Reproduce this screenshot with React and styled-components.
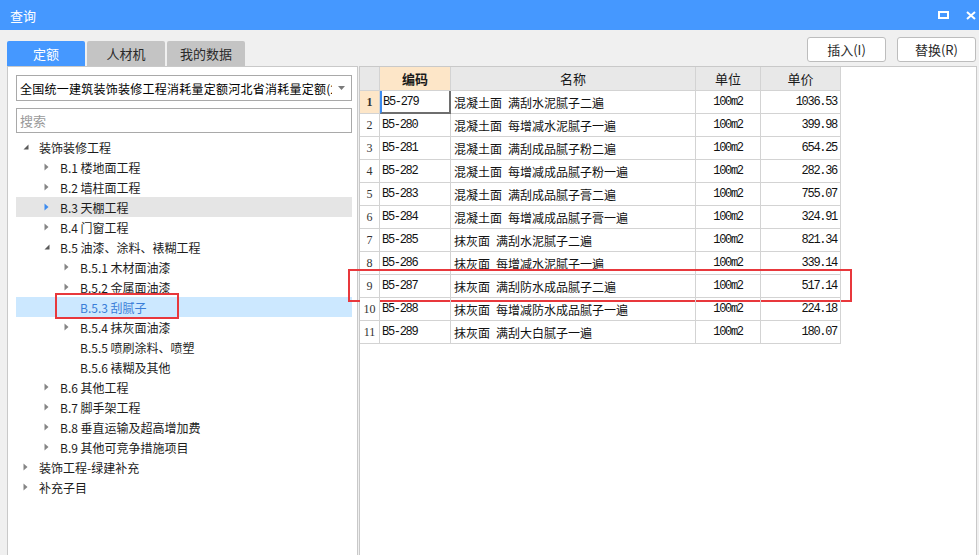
import React from 'react'
import styled, { createGlobalStyle } from 'styled-components'

const GlobalStyle = createGlobalStyle`
  html, body {
    margin: 0;
    padding: 0;
    background: #f0f0f0;
    overflow: hidden;
  }
  * {
    box-sizing: border-box;
  }
`

const CJK = `"Noto Sans CJK SC", "Noto Sans", sans-serif`
const MONO = `"Liberation Mono", "Noto Sans CJK SC", monospace`

const Window = styled.div`
  width: 979px;
  height: 555px;
  display: flex;
  flex-direction: column;
  background: #f0f0f0;
  font-family: ${CJK};
  overflow: hidden;
`
const TitleBar = styled.div`
  height: 30px;
  flex: none;
  background: #4598ff;
  display: flex;
  align-items: center;
  justify-content: space-between;
  padding: 0 3px 0 10px;
  color: #ffffff;
  font-size: 13px;
`
const TitleIcons = styled.div`
  display: flex;
  align-items: center;
  gap: 16px;
`
const IconBtn = styled.span`
  width: 11px;
  height: 10px;
  display: flex;
  align-items: center;
  justify-content: center;
`
const Body = styled.div`
  flex: 1;
  min-height: 0;
  display: flex;
  padding: 0 2px 0 7px;
`
const LeftCol = styled.div`
  width: 351px;
  flex: none;
  display: flex;
  flex-direction: column;
  padding-top: 11px;
`
const Tabs = styled.div`
  display: flex;
  gap: 2px;
  height: 25px;
`
const Tab = styled.div`
  width: 78px;
  display: flex;
  align-items: center;
  justify-content: center;
  font-size: 13px;
  border-radius: 2px 2px 0 0;
  background: ${(p) => (p.active ? '#4598ff' : '#c4c4c4')};
  color: ${(p) => (p.active ? '#ffffff' : '#2a2a2a')};
`
const LeftPanel = styled.div`
  flex: 1;
  background: #ffffff;
  border: 1px solid #c9c9c9;
  border-bottom: none;
  padding: 8px 5px 0 8px;
  display: flex;
  flex-direction: column;
`
const Select = styled.div`
  height: 26px;
  border: 1px solid #a9a9a9;
  display: flex;
  align-items: center;
  padding: 0 6px 0 3px;
  gap: 6px;
`
const SelectText = styled.span`
  flex: 1;
  white-space: nowrap;
  overflow: hidden;
  font-size: 12px;
  letter-spacing: 0.25px;
  color: #000;
`
const SearchBox = styled.div`
  height: 25px;
  margin-top: 7px;
  border: 1px solid #a9a9a9;
  display: flex;
  align-items: center;
  padding-left: 3px;
  font-size: 13px;
  color: #9a9a9a;
`
const Tree = styled.div`
  margin-top: 4px;
  display: flex;
  flex-direction: column;
`
const TreeRow = styled.div`
  position: relative;
  height: 20px;
  display: flex;
  align-items: center;
  padding-left: ${(p) => p.pad}px;
  font-size: 12px;
  background: ${(p) => (p.selected ? '#cce8ff' : p.hover ? '#e5e5e5' : 'transparent')};
  color: ${(p) => (p.selected ? '#3a7ed8' : '#1c1c1c')};
`
const Arrow = styled.span`
  width: 19px;
  height: 20px;
  flex: none;
  display: flex;
  align-items: center;
  padding-left: 3px;
`
const Mark = styled.div`
  position: absolute;
  border: 2px solid #e8383c;
  pointer-events: none;
`
const RightCol = styled.div`
  flex: 1;
  margin-left: 1px;
  display: flex;
  flex-direction: column;
  padding-top: 7px;
`
const Toolbar = styled.div`
  height: 25px;
  display: flex;
  justify-content: flex-end;
  gap: 11px;
  padding-right: 1px;
`
const Button = styled.div`
  width: 79px;
  display: flex;
  align-items: center;
  justify-content: center;
  background: #ffffff;
  border: 1px solid #bdbdbd;
  border-radius: 3px;
  font-size: 13px;
  color: #2a2a2a;
`
const RightPanel = styled.div`
  flex: 1;
  margin-top: 4px;
  background: #ffffff;
  border: 1px solid #c9c9c9;
  border-bottom: none;
`
const Grid = styled.div`
  width: 481px;
  display: flex;
  flex-direction: column;
`
const GridRow = styled.div`
  position: relative;
  display: grid;
  grid-template-columns: 20px 71px 245px 65px 80px;
  height: ${(p) => (p.head ? 24 : 23)}px;
`
const Cell = styled.div`
  border-right: 1px solid #d3d3d3;
  border-bottom: 1px solid #d3d3d3;
  display: flex;
  align-items: center;
  justify-content: ${(p) => p.align || 'flex-start'};
  padding: 0 ${(p) => (p.align === 'flex-end' ? 3 : 2)}px 0 2px;
  white-space: nowrap;
  overflow: hidden;
  color: #111;
`
const HeadCell = styled(Cell)`
  justify-content: center;
  background: ${(p) => (p.active ? '#fde6c8' : '#e8e8e8')};
  font-size: 13px;
  font-weight: ${(p) => (p.active ? 700 : 400)};
  color: #1a1a1a;
`
const NumCell = styled(Cell)`
  justify-content: center;
  padding: 0;
  background: ${(p) => (p.active ? '#fde6c8' : '#ffffff')};
  font-family: "Liberation Serif", serif;
  font-size: 12px;
  font-weight: ${(p) => (p.active ? 700 : 400)};
  color: #333;
`
const CodeCell = styled(Cell)`
  font-family: ${MONO};
  font-size: 12px;
  letter-spacing: -1.3px;
  ${(p) =>
    p.focused &&
    `
    border: 2px solid #6e6e6e;
    border-top: none;
    border-left-color: #3c8cf0;
    padding-left: 1px;
  `}
`
const NameCell = styled(Cell)`
  font-size: 12px;
  padding-left: 3px;
`
const DataCell = styled(Cell)`
  font-family: ${MONO};
  font-size: 12px;
  letter-spacing: -1.3px;
`

const tree = [
  { pad: 4, label: '装饰装修工程', arrow: 'open' },
  { pad: 25, label: 'B.1 楼地面工程', arrow: 'closed' },
  { pad: 25, label: 'B.2 墙柱面工程', arrow: 'closed' },
  { pad: 25, label: 'B.3 天棚工程', arrow: 'closed', hover: true },
  { pad: 25, label: 'B.4 门窗工程', arrow: 'closed' },
  { pad: 25, label: 'B.5 油漆、涂料、裱糊工程', arrow: 'open' },
  { pad: 45, label: 'B.5.1 木材面油漆', arrow: 'closed' },
  { pad: 45, label: 'B.5.2 金属面油漆', arrow: 'closed' },
  { pad: 45, label: 'B.5.3 刮腻子', selected: true },
  { pad: 45, label: 'B.5.4 抹灰面油漆', arrow: 'closed' },
  { pad: 45, label: 'B.5.5 喷刷涂料、喷塑' },
  { pad: 45, label: 'B.5.6 裱糊及其他' },
  { pad: 25, label: 'B.6 其他工程', arrow: 'closed' },
  { pad: 25, label: 'B.7 脚手架工程', arrow: 'closed' },
  { pad: 25, label: 'B.8 垂直运输及超高增加费', arrow: 'closed' },
  { pad: 25, label: 'B.9 其他可竞争措施项目', arrow: 'closed' },
  { pad: 4, label: '装饰工程-绿建补充', arrow: 'closed' },
  { pad: 4, label: '补充子目', arrow: 'closed' },
]

const rows = [
  ['B5-279', '混凝土面', '满刮水泥腻子二遍', '1036.53'],
  ['B5-280', '混凝土面', '每增减水泥腻子一遍', '399.98'],
  ['B5-281', '混凝土面', '满刮成品腻子粉二遍', '654.25'],
  ['B5-282', '混凝土面', '每增减成品腻子粉一遍', '282.36'],
  ['B5-283', '混凝土面', '满刮成品腻子膏二遍', '755.07'],
  ['B5-284', '混凝土面', '每增减成品腻子膏一遍', '324.91'],
  ['B5-285', '抹灰面', '满刮水泥腻子二遍', '821.34'],
  ['B5-286', '抹灰面', '每增减水泥腻子一遍', '339.14'],
  ['B5-287', '抹灰面', '满刮防水成品腻子二遍', '517.14'],
  ['B5-288', '抹灰面', '每增减防水成品腻子一遍', '224.18'],
  ['B5-289', '抹灰面', '满刮大白腻子一遍', '180.07'],
]

function TreeArrow({ type, hover }) {
  if (type === 'open') {
    return (
      <svg width="6" height="6" viewBox="0 0 6 6">
        <polygon points="5.5,0.5 5.5,5.5 0.5,5.5" fill="#5a5a5a" />
      </svg>
    )
  }
  if (type === 'closed') {
    return (
      <svg width="5" height="8" viewBox="0 0 5 8">
        <polygon points="0.5,0.5 4.5,4 0.5,7.5" fill={hover ? '#3d8bef' : '#858585'} />
      </svg>
    )
  }
  return null
}

export default function App() {
  return (
    <>
      <GlobalStyle />
      <Window>
        <TitleBar>
          <span>查询</span>
          <TitleIcons>
            <IconBtn>
              <svg width="11" height="8" viewBox="0 0 11 8">
                <rect x="1" y="1" width="9" height="6" fill="none" stroke="#fff" strokeWidth="2" />
              </svg>
            </IconBtn>
            <IconBtn>
              <svg width="10" height="9" viewBox="0 0 10 9">
                <path d="M1 1 L9 8 M9 1 L1 8" stroke="#fff" strokeWidth="2" />
              </svg>
            </IconBtn>
          </TitleIcons>
        </TitleBar>
        <Body>
          <LeftCol>
            <Tabs>
              <Tab active>定额</Tab>
              <Tab>人材机</Tab>
              <Tab>我的数据</Tab>
            </Tabs>
            <LeftPanel>
              <Select>
                <SelectText>全国统一建筑装饰装修工程消耗量定额河北省消耗量定额(2012)</SelectText>
                <svg width="7" height="4" viewBox="0 0 7 4">
                  <polygon points="0,0 7,0 3.5,4" fill="#7a7a7a" />
                </svg>
              </Select>
              <SearchBox>搜索</SearchBox>
              <Tree>
                {tree.map((n) => (
                  <TreeRow key={n.label} pad={n.pad} hover={n.hover} selected={n.selected}>
                    <Arrow>
                      <TreeArrow type={n.arrow} hover={n.hover} />
                    </Arrow>
                    {n.label}
                    {n.selected && (
                      <Mark style={{ left: 39, top: -4, width: 124, height: 26 }} />
                    )}
                  </TreeRow>
                ))}
              </Tree>
            </LeftPanel>
          </LeftCol>
          <RightCol>
            <Toolbar>
              <Button>插入(I)</Button>
              <Button>替换(R)</Button>
            </Toolbar>
            <RightPanel>
              <Grid>
                <GridRow head>
                  <HeadCell />
                  <HeadCell active>编码</HeadCell>
                  <HeadCell>名称</HeadCell>
                  <HeadCell>单位</HeadCell>
                  <HeadCell>单价</HeadCell>
                </GridRow>
                {rows.map((r, i) => (
                  <GridRow key={r[0]}>
                    <NumCell active={i === 0}>{i + 1}</NumCell>
                    <CodeCell focused={i === 0}>{r[0]}</CodeCell>
                    <NameCell>
                      {r[1]}&ensp;{r[2]}
                    </NameCell>
                    <DataCell align="center">100m2</DataCell>
                    <DataCell align="flex-end">{r[3]}</DataCell>
                    {i === 8 && <Mark style={{ left: -12, top: -6, width: 504, height: 33 }} />}
                  </GridRow>
                ))}
              </Grid>
            </RightPanel>
          </RightCol>
        </Body>
      </Window>
    </>
  )
}
